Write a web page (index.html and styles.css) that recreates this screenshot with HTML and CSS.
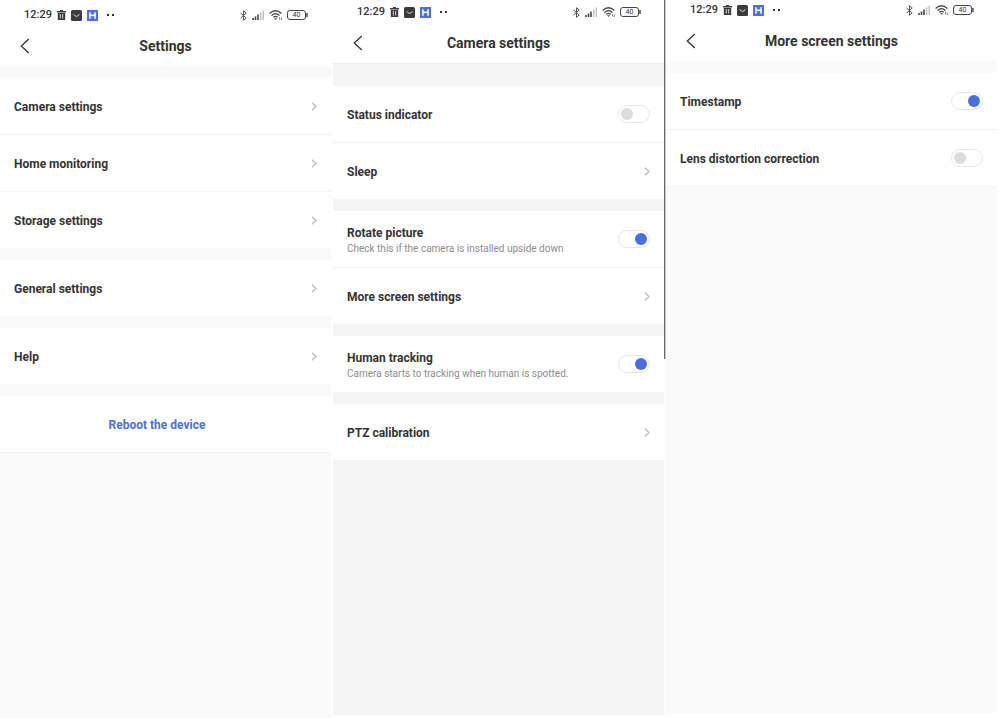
FILE: index.html
```
<!DOCTYPE html>
<html lang="en">
<head>
  <meta charset="UTF-8">
  <meta name="viewport" content="width=device-width, initial-scale=1.0">
  <title>Camera settings</title>
  <link rel="stylesheet" href="styles.css">
</head>
<body>
  <!-- shared icons -->
  <svg class="sprite" aria-hidden="true">
    <symbol id="trash" viewBox="0 0 9 10">
      <path fill="#3a3a3a" d="M3 0h3v1H9v1.500H0V1h3zM.8 3h7.400v7H.8z"/>
      <path stroke="#fff" stroke-width=".8" d="M3.300 4v4.500M5.700 4v4.500"/>
    </symbol>
    <symbol id="bag" viewBox="0 0 11 11">
      <rect width="11" height="11" rx="1.500" fill="#3a3b3c"/>
      <path d="M2.600 4.200Q5.500 8.600 8.400 4.200" fill="none" stroke="#ddd" stroke-width="1"/>
    </symbol>
    <symbol id="home" viewBox="0 0 11 11">
      <rect width="11" height="11" fill="#4a6fe0"/>
      <path d="M2.900 2.300v6.400M8.100 2.300v6.400M2.900 4.200Q5.500 6.800 8.100 4.200" fill="none" stroke="#fff" stroke-width="1.500"/>
    </symbol>
    <symbol id="bluetooth" viewBox="0 0 7 11">
      <path d="M.6 3l5.600 5-2.700 2.300V.7L6.200 3 .6 8" fill="none" stroke="#555" stroke-width="1"/>
    </symbol>
    <symbol id="signal" viewBox="0 0 12 10">
      <path d="M1 10V8M3.500 10V6.500M6 10V4.500" stroke="#444" stroke-width="1.600"/>
      <path d="M8.700 10V2.500M11.300 10V.5" stroke="#bbb" stroke-width="1.300"/>
    </symbol>
    <symbol id="wifi" viewBox="0 0 13 10">
      <path d="M.6 3.400Q6.500-1.800 12.400 3.400M2.500 5.400Q6.500 2 10.500 5.400M4.400 7.300Q6.500 5.500 8.600 7.300" fill="none" stroke="#444" stroke-width="1.300"/>
      <path d="M5 8.200h3L6.500 9.900z" fill="#444"/>
      <path d="M10.500 7v2.500M12.300 7.500V10" stroke="#777" stroke-width=".9"/>
    </symbol>
    <symbol id="back" viewBox="0 0 10 16">
      <path d="M8.800 1L1.300 8l7.500 7" fill="none" stroke="#333" stroke-width="1.300"/>
    </symbol>
    <symbol id="chevron" viewBox="0 0 6 9">
      <path d="M1 .8l4 3.700-4 3.700" fill="none" stroke="#b8b8b8" stroke-width="1.200"/>
    </symbol>
  </svg>

  <main class="screens">
    <section class="screen screen-main">
      <div class="status">
        <span class="time">12:29</span>
        <svg class="ic-trash"><use href="#trash"/></svg>
        <svg class="ic-app"><use href="#bag"/></svg>
        <svg class="ic-app"><use href="#home"/></svg>
        <span class="dots"></span>
        <svg class="ic-bt"><use href="#bluetooth"/></svg>
        <svg class="ic-signal"><use href="#signal"/></svg>
        <svg class="ic-wifi"><use href="#wifi"/></svg>
        <span class="battery">40</span>
      </div>
      <header class="nav">
        <button class="back" aria-label="Back"><svg><use href="#back"/></svg></button>
        <h2>Settings</h2>
      </header>
      <div class="group">
        <a class="row" href="#"><span class="label">Camera settings</span><svg class="chevron"><use href="#chevron"/></svg></a>
        <a class="row" href="#"><span class="label">Home monitoring</span><svg class="chevron"><use href="#chevron"/></svg></a>
        <a class="row" href="#"><span class="label">Storage settings</span><svg class="chevron"><use href="#chevron"/></svg></a>
      </div>
      <div class="group">
        <a class="row" href="#"><span class="label">General settings</span><svg class="chevron"><use href="#chevron"/></svg></a>
      </div>
      <div class="group">
        <a class="row" href="#"><span class="label">Help</span><svg class="chevron"><use href="#chevron"/></svg></a>
      </div>
      <div class="group">
        <button class="row reboot"><span class="label">Reboot the device</span></button>
      </div>
    </section>

    <section class="screen screen-camera">
      <div class="status">
        <span class="time">12:29</span>
        <svg class="ic-trash"><use href="#trash"/></svg>
        <svg class="ic-app"><use href="#bag"/></svg>
        <svg class="ic-app"><use href="#home"/></svg>
        <span class="dots"></span>
        <svg class="ic-bt"><use href="#bluetooth"/></svg>
        <svg class="ic-signal"><use href="#signal"/></svg>
        <svg class="ic-wifi"><use href="#wifi"/></svg>
        <span class="battery">40</span>
      </div>
      <header class="nav">
        <button class="back" aria-label="Back"><svg><use href="#back"/></svg></button>
        <h2>Camera settings</h2>
      </header>
      <div class="group">
        <label class="row"><span class="label">Status indicator</span><input class="toggle" type="checkbox"></label>
        <a class="row" href="#"><span class="label">Sleep</span><svg class="chevron"><use href="#chevron"/></svg></a>
      </div>
      <div class="group">
        <label class="row">
          <span class="label">Rotate picture<small>Check this if the camera is installed upside down</small></span>
          <input class="toggle" type="checkbox" checked>
        </label>
        <a class="row" href="#"><span class="label">More screen settings</span><svg class="chevron"><use href="#chevron"/></svg></a>
      </div>
      <div class="group">
        <label class="row">
          <span class="label">Human tracking<small>Camera starts to tracking when human is spotted.</small></span>
          <input class="toggle" type="checkbox" checked>
        </label>
      </div>
      <div class="group">
        <a class="row" href="#"><span class="label">PTZ calibration</span><svg class="chevron"><use href="#chevron"/></svg></a>
      </div>
    </section>

    <section class="screen screen-more">
      <div class="status">
        <span class="time">12:29</span>
        <svg class="ic-trash"><use href="#trash"/></svg>
        <svg class="ic-app"><use href="#bag"/></svg>
        <svg class="ic-app"><use href="#home"/></svg>
        <span class="dots"></span>
        <svg class="ic-bt"><use href="#bluetooth"/></svg>
        <svg class="ic-signal"><use href="#signal"/></svg>
        <svg class="ic-wifi"><use href="#wifi"/></svg>
        <span class="battery">40</span>
      </div>
      <header class="nav">
        <button class="back" aria-label="Back"><svg><use href="#back"/></svg></button>
        <h2>More screen settings</h2>
      </header>
      <div class="group">
        <label class="row"><span class="label">Timestamp</span><input class="toggle" type="checkbox" checked></label>
        <label class="row"><span class="label">Lens distortion correction</span><input class="toggle" type="checkbox"></label>
      </div>
    </section>
  </main>
</body>
</html>
```
FILE: styles.css
```
:root {
  --text: #333;
  --muted: #8c8c8c;
  --blue: #4a6fdc;
  --line: #f3f3f3;
  --bg: #fafafa;
}
* {
  margin: 0;
  padding: 0;
  box-sizing: border-box;
  font-family: Roboto, "Liberation Sans", sans-serif;
}
body {
  background: #fff;
  color: var(--text);
}
.sprite {
  display: none;
}
.screens {
  display: grid;
  grid-template-columns: repeat(3, 1fr);
  gap: 2px;
  min-height: 100vh;
  padding-right: 3px;
}
.screen {
  position: relative;
  background: var(--bg);
}
.screen-main .status {
  padding-top: 5px;
}
.screen-camera {
  --bg: #f5f5f5;
  margin-bottom: 3px;
}
.screen-camera .status {
  padding-top: 2px;
}
.screen-camera .nav {
  height: 42px;
  border-bottom: 1px solid #ebebeb;
  margin-bottom: 22px;
}
.screen-more {
  margin-bottom: 5px;
}
/* dark edge between the second and third screen */
.screen-more::before {
  content: "";
  position: absolute;
  top: 0;
  left: -2px;
  width: 1px;
  height: 50vh;
  background: #666;
  border-right: 1px solid #ccc;
}

.status {
  display: flex;
  align-items: center;
  gap: 5px;
  padding: 0 25px 0 24px;
  background: #fff;
}
.status svg {
  display: block;
}
.time {
  font-size: 11px;
  font-weight: 500;
  line-height: 20px;
}
.ic-trash {
  width: 9px;
  height: 10px;
}
.ic-app {
  width: 11px;
  height: 11px;
}
.dots {
  width: 7px;
  height: 2px;
  margin: 0 auto 0 4px;
  border: solid #333;
  border-width: 0 2px;
}
.ic-bt {
  width: 7px;
  height: 11px;
}
.ic-signal {
  width: 12px;
  height: 10px;
}
.ic-wifi {
  width: 13px;
  height: 10px;
}
.battery {
  position: relative;
  width: 19px;
  height: 10px;
  border: 1px solid #444;
  border-radius: 3px;
  font-size: 7px;
  line-height: 8px;
  text-align: center;
}
.battery::after {
  content: "";
  position: absolute;
  top: 2px;
  right: -3px;
  width: 2px;
  height: 4px;
  background: #777;
}

.nav {
  display: grid;
  grid-template-columns: 30px 1fr 30px;
  align-items: center;
  height: 41px;
  padding: 0 15px;
  margin-bottom: 12px;
  background: #fff;
}
.nav h2 {
  font-size: 14px;
  font-weight: 700;
  text-align: center;
}
.back {
  padding: 5px;
  border: none;
  background: none;
  text-align: left;
  cursor: pointer;
}
.back svg {
  display: block;
  width: 10px;
  height: 16px;
}

.group {
  margin-bottom: 12px;
  background: #fff;
}
.row {
  display: flex;
  align-items: center;
  justify-content: space-between;
  width: 100%;
  height: 56px;
  padding: 0 14px;
  color: var(--text);
  font-size: 12px;
  font-weight: 700;
  text-decoration: none;
  cursor: pointer;
}
.row + .row {
  height: 57px;
  border-top: 1px solid var(--line);
}
.label {
  padding-top: 1px;
}
.row small {
  display: block;
  margin-top: 3px;
  color: var(--muted);
  font-size: 10px;
  font-weight: 400;
}
.group:last-child {
  border-bottom: 1px solid var(--line);
}
.chevron {
  width: 6px;
  height: 9px;
}
.reboot {
  justify-content: center;
  padding-right: 31px;
  border: none;
  background: none;
  color: var(--blue);
}
.toggle {
  appearance: none;
  width: 32px;
  height: 18px;
  padding: 2px;
  border: 1px solid #e6e6e6;
  border-radius: 9px;
  background: #fff;
  cursor: pointer;
}
.toggle::before {
  content: "";
  display: block;
  width: 12px;
  height: 12px;
  border-radius: 50%;
  background: #dcdcdc;
}
.toggle:checked::before {
  margin-left: auto;
  background: var(--blue);
}
```
